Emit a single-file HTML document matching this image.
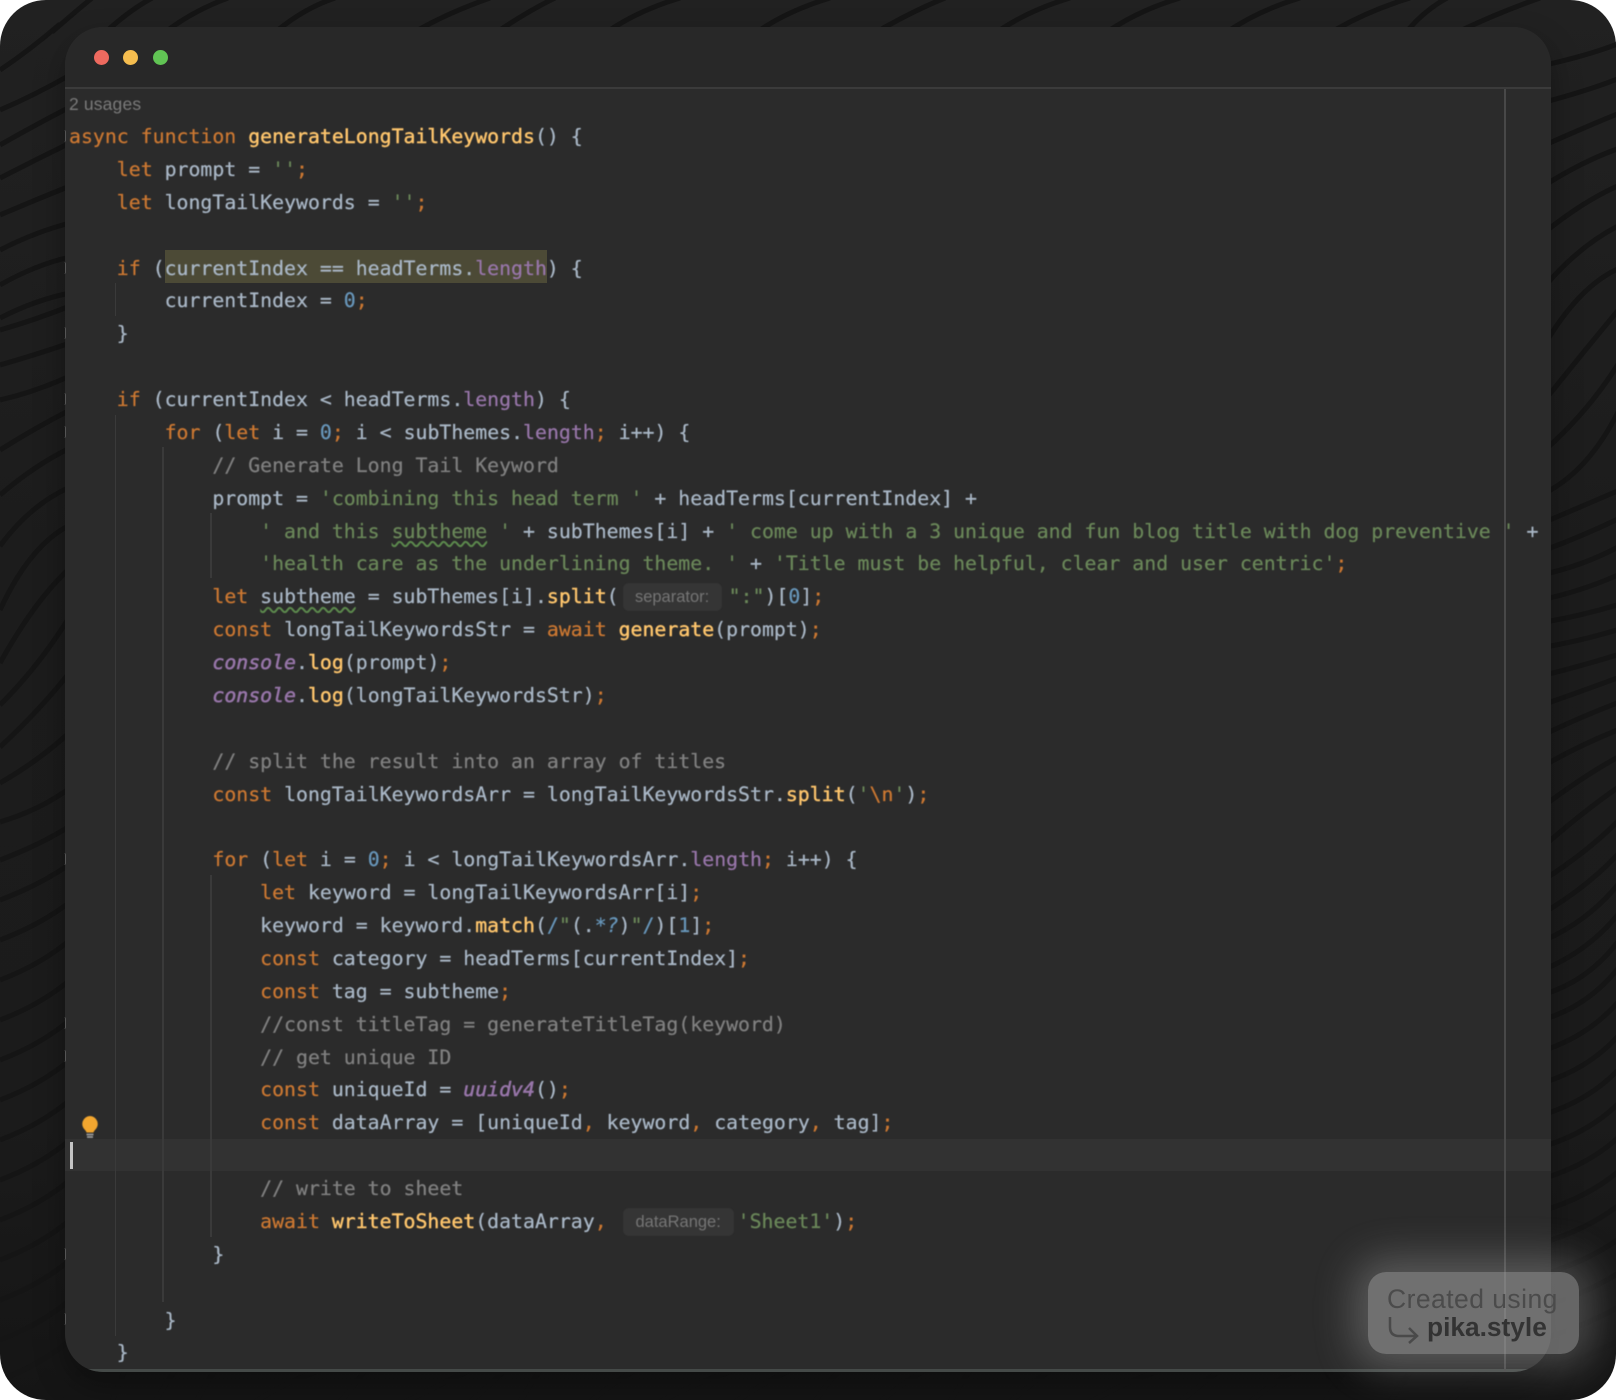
<!DOCTYPE html>
<html><head><meta charset="utf-8"><title>Code</title>
<style>
html,body{margin:0;padding:0;background:#fff;width:1616px;height:1400px;overflow:hidden}
#frame{position:absolute;left:0;top:0;width:1616px;height:1400px;border-radius:46px;overflow:hidden;background:linear-gradient(#212121,#1c1c1c 40%,#1b1b1b 80%,#151515)}
#bg{position:absolute;left:0;top:0}
#win{position:absolute;left:65px;top:27px;width:1486px;height:1345px;border-radius:38px;background:#2b2b2b;overflow:hidden;box-shadow:0 14px 30px rgba(0,0,0,.35)}
#title{position:absolute;left:0;top:0;width:100%;height:60px;background:#282828;border-bottom:2px solid #3b3b3b}
.dot{position:absolute;top:22.5px;width:15px;height:15px;border-radius:50%}
#bottomline{position:absolute;left:0;bottom:0;width:100%;height:3px;background:#454a48}
.abs{position:absolute}
.g{position:absolute;width:1.5px;background:#3a3a3a}
.f{position:absolute;left:0;width:3px;height:12px;border-right:1.5px solid #555;border-radius:0 2px 2px 0}
#code{position:absolute;left:69px;top:121px;margin:0;font:19.85px/32.87px "DejaVu Sans Mono","Liberation Mono",monospace;color:#a9b7c6;filter:blur(.6px);white-space:pre;-webkit-text-stroke:.25px}
.k{color:#cc7832}.n{color:#ffc66d;-webkit-text-stroke:.4px}.s{color:#6a8759}.c{color:#808080}.d{color:#6897bb}.p{color:#9876aa}.i{font-style:italic}.b{-webkit-text-stroke:.55px}
.w{text-decoration:underline wavy #5c8a4d 1.5px;text-underline-offset:3px}
.inl{display:inline-block;position:relative;height:20px;vertical-align:baseline}
.inl b{position:absolute;top:0;height:28px;line-height:28px;border-radius:6px;background:#353535;color:#757575;font:16.5px/28px "Liberation Sans",sans-serif;text-align:center;-webkit-text-stroke:0}
#mark{position:absolute;left:1368px;top:1272px;width:211px;height:82px;border-radius:18px;background:rgba(170,170,170,.55);box-shadow:0 0 40px 14px rgba(200,200,200,.3)}
</style></head><body>
<div id="frame">
<svg id="bg" width="1616" height="1400" viewBox="0 0 1616 1400" fill="none" stroke="#151515" stroke-width="5">
<path d="M0 70Q30 50 60 24M0 110Q35 95 70 75M0 145Q35 125 70 107M0 178Q35 160 70 143M0 215Q35 200 70 186M0 250Q35 232 70 223M0 285Q35 265 70 257M0 318Q35 300 70 293M0 330Q35 320 70 306M0 365Q35 355 70 343M0 400Q35 392 70 376M0 450Q35 428 70 410M0 495Q35 465 70 448M0 546Q30 505 70 487M0 610Q30 545 70 525M0 663Q35 600 70 568M0 705Q40 665 70 616M0 747Q40 710 70 672M0 783Q40 760 70 732M0 822Q40 810 70 788M0 860Q40 845 70 826M0 900Q40 885 70 864M0 940Q40 925 70 902M0 980Q40 965 70 940M0 1020Q40 1005 70 980M0 1060Q40 1045 70 1020M0 1100Q40 1085 70 1060M0 1140Q40 1125 70 1100M0 1180Q40 1165 70 1140M0 1220Q40 1205 70 1180M0 1260Q40 1245 70 1220M0 1300Q40 1285 70 1260M0 1340Q40 1325 70 1300M0 1380Q40 1365 70 1340"/>
<path d="M1545 65Q1590 55 1620 43M1545 102Q1590 90 1620 78M1545 145Q1590 125 1620 113M1545 185Q1585 160 1620 148M1545 232Q1585 200 1620 185M1545 286Q1580 245 1620 225M1545 344Q1580 285 1620 268M1545 400Q1585 350 1620 308M1545 450Q1590 410 1620 361M1545 493Q1590 470 1620 408M1545 522Q1585 505 1620 490M1545 550Q1585 535 1620 518M1545 574Q1585 565 1620 546M1545 599Q1585 590 1620 574M1545 622Q1585 615 1620 604M1545 647Q1585 640 1620 629M1545 675Q1585 665 1620 654M1545 704Q1585 690 1620 677M1545 734Q1585 715 1620 702M1545 765Q1580 745 1620 729M1545 805Q1585 775 1620 756M1545 845Q1585 810 1620 786M1545 879Q1590 850 1620 819M1545 912Q1590 885 1620 852M1545 940Q1590 920 1620 882M1545 969Q1590 950 1620 912M1545 994Q1590 980 1620 939M1545 1019Q1590 1005 1620 966M1545 1050Q1590 1035 1620 1000M1545 1082Q1590 1068 1620 1034M1545 1114Q1590 1100 1620 1068M1545 1146Q1590 1132 1620 1102M1545 1178Q1590 1164 1620 1136M1545 1210Q1590 1196 1620 1170M1545 1242Q1590 1228 1620 1204M1545 1274Q1590 1260 1620 1238M1545 1306Q1590 1292 1620 1272M1545 1338Q1590 1324 1620 1306M1545 1370Q1590 1356 1620 1340"/>
<path d="M52 32Q75 12 92 -2M108 30Q130 10 152 -2M168 30Q195 10 228 -2M278 30Q305 8 335 -2M418 30Q450 12 490 -2M500 30Q530 10 555 -2M610 30Q640 10 680 -2M760 30Q790 10 830 -2M880 30Q915 10 945 -2M1000 30Q1030 10 1070 -2M1110 30Q1140 10 1180 -2M1230 30Q1260 10 1300 -2M1335 30Q1370 10 1410 -2M1408 30Q1425 10 1447 -2M1462 30Q1500 12 1540 -2"/>
<path d="M25 1402Q40 1385 48 1370M64 1402Q72 1385 80 1370M112 1402Q118 1385 125 1370M155 1402Q165 1385 175 1370M196 1402Q205 1385 215 1370M255 1402Q280 1385 320 1370M340 1402Q355 1385 365 1370M405 1402Q440 1385 470 1370M470 1402Q490 1385 505 1370M520 1402Q530 1385 540 1370M590 1402Q610 1385 635 1370M660 1402Q690 1385 735 1370M735 1402Q760 1385 790 1370M815 1402Q825 1385 840 1370M880 1402Q900 1385 925 1370M950 1402Q960 1385 970 1370M1010 1402Q1030 1385 1050 1370M1090 1402Q1120 1385 1160 1370M1180 1402Q1200 1385 1220 1370M1250 1402Q1270 1385 1295 1370M1325 1402Q1335 1385 1345 1370M1390 1402Q1400 1385 1412 1370M1450 1402Q1465 1385 1485 1370M1520 1402Q1535 1385 1555 1370"/>
</svg>
<div id="win">
  <div id="title">
    <div class="dot" style="left:28.5px;background:#ee6a5f"></div>
    <div class="dot" style="left:58px;background:#f5bd4f"></div>
    <div class="dot" style="left:87.5px;background:#61c454"></div>
  </div>
  <div id="bottomline"></div>
</div>
<div class="abs" style="left:65px;top:1139px;width:1486px;height:32px;background:#323232"></div>
<div class="abs" style="left:1503.5px;top:89px;width:2px;height:1283px;background:#484848"></div>
<div class="abs" style="left:165px;top:250px;width:382px;height:33px;background:#4c4a36"></div>
<div class="g" style="left:114.5px;top:283px;height:33px"></div>
<div class="g" style="left:114.5px;top:415px;height:921px"></div>
<div class="g" style="left:162px;top:447px;height:855px"></div>
<div class="g" style="left:210px;top:513px;height:65px"></div>
<div class="g" style="left:210px;top:875px;height:362px"></div>
<div class="f" style="left:62px;top:262px"></div>
<div class="f" style="left:62px;top:327px"></div>
<div class="f" style="left:62px;top:393px"></div>
<div class="f" style="left:62px;top:426px"></div>
<div class="f" style="left:62px;top:853px"></div>
<div class="f" style="left:62px;top:1017px"></div>
<div class="f" style="left:62px;top:1050px"></div>
<div class="f" style="left:62px;top:1248px"></div>
<div class="f" style="left:62px;top:1313px"></div>
<div class="f" style="left:62px;top:130px"></div>
<div class="abs" style="left:69.5px;top:1142px;width:3px;height:27px;background:#c4c4c4"></div>
<svg class="abs" style="left:78px;top:1112px;filter:blur(.4px)" width="24" height="30" viewBox="0 0 24 30">
  <path d="M12 4a8 8 0 0 1 5 14c-1 1-1.3 1.8-1.5 2.5h-7C8.300 19.800 8 19 7 18A8 8 0 0 1 12 4z" fill="#f2a62f"/>
  <path d="M8.500 22.500h7M9 25h6" stroke="#9a9a9a" stroke-width="1.800"/>
</svg>
<div class="abs" style="left:69px;top:94px;font:17.500px/20px 'Liberation Sans',sans-serif;letter-spacing:.15px;color:#7b7b7b;filter:blur(.4px)">2 usages</div>
<pre id="code"><span class="k">async function </span><span class="n">generateLongTailKeywords</span>() {
    <span class="k">let </span>prompt = <span class="s">''</span><span class="k">;</span>
    <span class="k">let </span>longTailKeywords = <span class="s">''</span><span class="k">;</span>

    <span class="k">if </span>(currentIndex == headTerms.<span class="p">length</span>) {
        currentIndex = <span class="d">0</span><span class="k">;</span>
    }

    <span class="k">if </span>(currentIndex &lt; headTerms.<span class="p">length</span>) {
        <span class="k">for </span>(<span class="k">let </span>i = <span class="d">0</span><span class="k">; </span>i &lt; subThemes.<span class="p">length</span><span class="k">; </span>i++) {
            <span class="c">// Generate Long Tail Keyword</span>
            prompt = <span class="s">'combining this head term '</span> + headTerms[currentIndex] +
                <span class="s">' and this <span class="w">subtheme</span> '</span> + subThemes[i] + <span class="s">' come up with a 3 unique and fun blog title with dog preventive '</span> +
                <span class="s">'health care as the underlining theme. '</span> + <span class="s">'Title must be helpful, clear and user centric'</span><span class="k">;</span>
            <span class="k">let </span><span class="w">subtheme</span> = subThemes[i].<span class="n">split</span>(<span class="inl" style="width:110px"><b style="left:4px;width:99px">separator:</b></span><span class="s">":"</span>)[<span class="d">0</span>]<span class="k">;</span>
            <span class="k">const </span>longTailKeywordsStr = <span class="k">await </span><span class="n">generate</span>(prompt)<span class="k">;</span>
            <span class="p i b">console</span>.<span class="n">log</span>(prompt)<span class="k">;</span>
            <span class="p i b">console</span>.<span class="n">log</span>(longTailKeywordsStr)<span class="k">;</span>

            <span class="c">// split the result into an array of titles</span>
            <span class="k">const </span>longTailKeywordsArr = longTailKeywordsStr.<span class="n">split</span>(<span class="s">'</span><span class="k">\n</span><span class="s">'</span>)<span class="k">;</span>

            <span class="k">for </span>(<span class="k">let </span>i = <span class="d">0</span><span class="k">; </span>i &lt; longTailKeywordsArr.<span class="p">length</span><span class="k">; </span>i++) {
                <span class="k">let </span>keyword = longTailKeywordsArr[i]<span class="k">;</span>
                keyword = keyword.<span class="n">match</span>(<span class="d">/</span><span class="s">"</span>(.<span class="d i">*?</span>)<span class="s">"</span><span class="d">/</span>)[<span class="d">1</span>]<span class="k">;</span>
                <span class="k">const </span>category = headTerms[currentIndex]<span class="k">;</span>
                <span class="k">const </span>tag = subtheme<span class="k">;</span>
                <span class="c">//const titleTag = generateTitleTag(keyword)</span>
                <span class="c">// get unique ID</span>
                <span class="k">const </span>uniqueId = <span class="p i b">uuidv4</span>()<span class="k">;</span>
                <span class="k">const </span>dataArray = [uniqueId<span class="k">, </span>keyword<span class="k">, </span>category<span class="k">, </span>tag]<span class="k">;</span>

                <span class="c">// write to sheet</span>
                <span class="k">await </span><span class="n">writeToSheet</span>(dataArray<span class="k">,</span><span class="inl" style="width:131px"><b style="left:16px;width:111px">dataRange:</b></span><span class="s">'Sheet1'</span>)<span class="k">;</span>
            }

        }
    }</pre>
<div id="mark"></div>
<div class="abs" style="left:1387px;top:1284px;font:26.500px/30px 'Liberation Sans',sans-serif;letter-spacing:.45px;color:#4b4b4b;filter:blur(.3px)">Created using</div>
<div class="abs" style="left:1427px;top:1312px;font:bold 26.300px/30px 'Liberation Sans',sans-serif;color:#333;filter:blur(.3px)">pika.style</div>
<svg class="abs" style="left:1386px;top:1314px" width="36" height="30" viewBox="0 0 36 30" fill="none" stroke="#4a4a4a" stroke-width="2.500">
  <path d="M4 3V13Q4 22 13 22H31M23 14L31 22L23 29" />
</svg>
</div>
</body></html>
